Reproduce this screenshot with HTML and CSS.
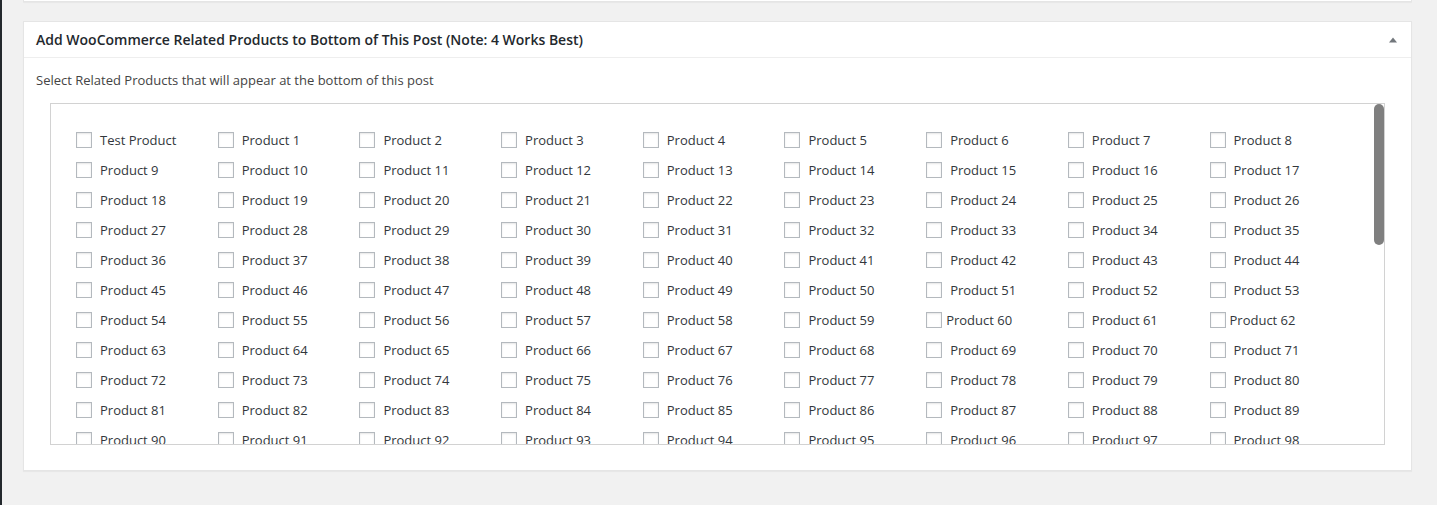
FILE: index.html
```html
<!DOCTYPE html>
<html>
<head>
<meta charset="utf-8">
<link rel="stylesheet" href="styles.css">
</head>
<body>
<div class="admin-edge"></div>
<div class="content">
  <div class="prev-box"></div>
  <div class="postbox">
    <div class="postbox-header">
      <h2 class="postbox-title">Add WooCommerce Related Products to Bottom of This Post (Note: 4 Works Best)</h2>
      <svg class="toggle" width="8" height="6" viewBox="0 0 8 6"><polygon points="0,5.5 4,0.5 8,5.5" fill="#72777c"/></svg>
    </div>
    <div class="inside">
      <p class="intro">Select Related Products that will appear at the bottom of this post</p>
      <div class="product-frame">
        <div class="product-scroll">
          <ul class="product-list" id="list"></ul>
        </div>
        <div class="scroll-thumb"></div>
      </div>
    </div>
  </div>
</div>
<script>
  var list = document.getElementById('list');
  var html = '';
  for (var i = 0; i <= 233; i++) {
    var name = i === 0 ? 'Test Product' : 'Product ' + i;
    var tight = (i === 60 || i === 62) ? ' tight' : '';
    html += '<li class="product-item' + tight + '"><label class="product-label"><input type="checkbox" class="product-check"><span>' + name + '</span></label></li>';
  }
  list.innerHTML = html;
</script>
</body>
</html>
```

FILE: styles.css
```css
html, body {
  margin: 0;
  padding: 0;
}
body {
  background: #f1f1f1;
  font-family: "Open Sans", "Liberation Sans", sans-serif;
  color: #444;
  font-size: 13px;
  display: flex;
  min-height: 505px;
}
.admin-edge {
  width: 2px;
  flex: none;
  background: #23282d;
}
.content {
  width: 1389px;
  margin-left: 21px;
}
.prev-box {
  height: 1px;
  background: #fff;
  border: 1px solid #e5e5e5;
  border-top: none;
  box-shadow: 0 1px 1px rgba(0,0,0,.04);
}
.postbox {
  margin-top: 19px;
  background: #fff;
  border: 1px solid #e5e5e5;
  box-shadow: 0 1px 1px rgba(0,0,0,.04);
}
.postbox-header {
  display: flex;
  align-items: center;
  justify-content: space-between;
  border-bottom: 1px solid #eee;
  padding: 0 14px 0 12px;
  height: 35px;
}
.postbox-title {
  margin: 0;
  font-size: 14px;
  font-weight: 600;
  color: #23282d;
  line-height: 1.4;
}
.toggle {
  display: block;
  margin-top: 1px;
}
.inside {
  padding: 13px 12px 25px;
}
.intro {
  margin: 0 0 13px;
  line-height: 19px;
  color: #444;
}
.product-frame {
  position: relative;
  margin: 0 14px;
}
.product-scroll {
  height: 340px;
  border: 1px solid #d2d2d2;
  overflow: hidden;
}
.scroll-thumb {
  position: absolute;
  top: 1px;
  right: 1px;
  width: 10px;
  height: 141px;
  border-radius: 5px;
  background: #7f7f7f;
}
.product-list {
  list-style: none;
  margin: 0;
  padding: 21px 0 21px 25px;
  display: grid;
  grid-template-columns: repeat(9, 141.7px);
  grid-auto-rows: 30px;
}
.product-item {
  display: flex;
  align-items: center;
}
.product-label {
  display: flex;
  align-items: center;
  line-height: 19px;
  color: #32373c;
  white-space: nowrap;
}
.product-check {
  -webkit-appearance: none;
  appearance: none;
  width: 16px;
  height: 16px;
  margin: 0 8px 0 0;
  border: 1px solid #b4b9be;
  background: #fff;
  box-shadow: inset 0 1px 2px rgba(0,0,0,.1);
  flex: none;
}
.tight .product-check {
  margin-right: 4px;
}
```
